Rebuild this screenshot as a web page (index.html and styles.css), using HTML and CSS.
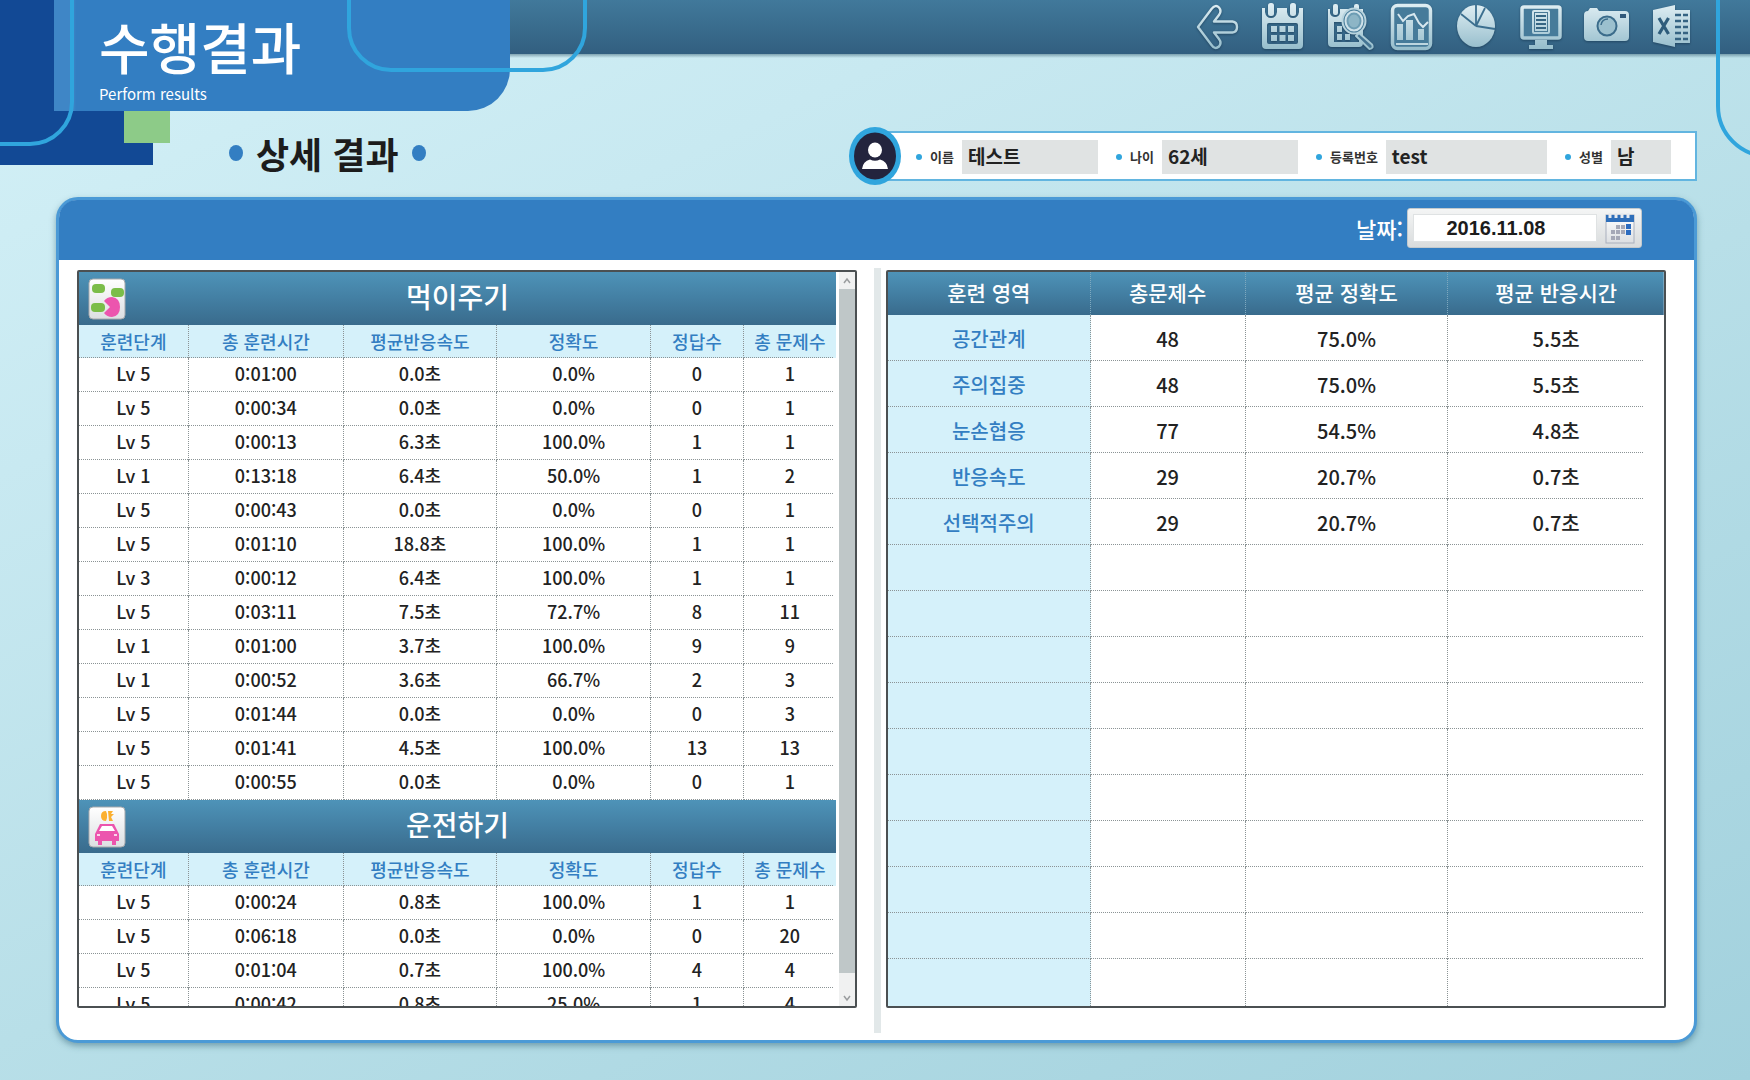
FILE: index.html
```html
<!DOCTYPE html>
<html lang="ko">
<head>
<meta charset="utf-8">
<meta name="viewport" content="width=device-width, initial-scale=1">
<title>수행결과 - 상세 결과</title>
<link rel="stylesheet" href="styles.css">
</head>
<body>
<svg class="defs" width="0" height="0" aria-hidden="true">
  <defs>
    <linearGradient id="steel" gradientUnits="userSpaceOnUse" x1="0" y1="4" x2="0" y2="50">
      <stop offset="0" stop-color="#dfeef3"/><stop offset="1" stop-color="#94bccb"/>
    </linearGradient>
    <linearGradient id="tile" x1="0" y1="0" x2="0" y2="1">
      <stop offset="0" stop-color="#ffffff"/><stop offset="1" stop-color="#dcdfe2"/>
    </linearGradient>
  </defs>
</svg>

<header class="top">
  <div class="brand">
    <h1 class="brand-title">수행결과</h1>
    <p class="brand-sub">Perform results</p>
  </div>
  <div class="deco" aria-hidden="true">
    <span class="deco-navy"></span>
    <span class="deco-step"></span>
    <span class="deco-green"></span>
    <span class="outline outline-left"></span>
    <span class="outline outline-mid"></span>
    <span class="outline outline-right"></span>
  </div>
  <nav class="tools" aria-label="도구">
    <button class="tool" type="button" aria-label="뒤로">
      <svg viewBox="0 0 48 54"><path d="M5 27 18.500 9q4-5 7.500-1.500Q29 11 26 15L21 21.500H39.500Q44 22 44 27T39.500 32.500H21L26 39Q29 43 26 46.500 22 50 18.500 45Z" fill="none" stroke="url(#steel)" stroke-width="2.400" stroke-linejoin="round"/></svg>
    </button>
    <button class="tool" type="button" aria-label="달력">
      <svg viewBox="0 0 48 54" fill="url(#steel)"><path fill-rule="evenodd" d="M4 8h3v4q1 6 6 6t6-6V8h10v4q1 6 6 6t6-6V8h4v37q0 4-4 4H8q-4 0-4-4ZM11 23q-2 0-2 2v17q0 2 2 2h27q2 0 2-2V25q0-2-2-2Z"/><rect x="10" y="3" width="6" height="13" rx="2.500"/><rect x="32" y="3" width="6" height="13" rx="2.500"/><path d="M13 26h6v6h-6zM21.500 26h6v6h-6zM30 26h6v6h-6zM13 35h6v6h-6zM21.500 35h6v6h-6zM30 35h6v6h-6z"/></svg>
    </button>
    <button class="tool" type="button" aria-label="달력 조회">
      <svg viewBox="0 0 48 54" fill="url(#steel)"><path fill-rule="evenodd" d="M5 9h2v4q1 4 5 4t5-4V9h23v34q0 4-4 4H9q-4 0-4-4ZM11 22v20h25V22Z"/><rect x="10" y="4" width="5" height="11" rx="2"/><rect x="31" y="4" width="5" height="8" rx="2"/><path d="M14 26h5v6h-5zM14 34h5v6h-5zM22 34h5v6h-5z"/><path d="M36 33 49 44.500q2 4-2.500 4.500L33 36Z" fill="#447493" stroke="url(#steel)" stroke-width="2" stroke-linejoin="round"/><ellipse cx="31" cy="21" rx="11.500" ry="12.500" fill="#4b7f9c" stroke="#b9d4de" stroke-width="2"/><ellipse cx="31" cy="21" rx="8.500" ry="9.500" fill="#6d9db4" stroke="#cfe2ea" stroke-width="2"/><ellipse cx="31" cy="21" rx="5.500" ry="6.500" fill="#8db5c6"/></svg>
    </button>
    <button class="tool" type="button" aria-label="그래프">
      <svg viewBox="0 0 48 54"><rect x="4.500" y="5.500" width="38" height="43" rx="5" fill="#467b9a" stroke="url(#steel)" stroke-width="3.500"/><path d="M9 24h6v16H9zM18 20h7v20h-7zM30 29h6v11h-6z" fill="url(#steel)"/><path d="M10 14l5 7 5-5 6-2 5 9 4 4 5-5" fill="none" stroke="#d8e8ef" stroke-width="2"/><path d="M8 43h32v2H8z" fill="#bdd6e0"/></svg>
    </button>
    <button class="tool" type="button" aria-label="통계">
      <svg viewBox="0 0 48 54"><ellipse cx="23" cy="26" rx="19" ry="21" fill="url(#steel)"/><path d="M23 26 8 14M23 26V5M23 26l9-18M23 26l19 3" stroke="#3c6f8f" stroke-width="1.800" fill="none"/></svg>
    </button>
    <button class="tool" type="button" aria-label="화면">
      <svg viewBox="0 0 48 54"><rect x="4" y="7" width="38" height="31" rx="2" fill="#467b9a" stroke="url(#steel)" stroke-width="3.500"/><path d="M17 40h12v5h6v4H11v-4h6z" fill="url(#steel)"/><rect x="14" y="10" width="18" height="24" rx="2" fill="url(#steel)"/><rect x="16.500" y="12.500" width="13" height="19" fill="none" stroke="#497a96" stroke-width="1"/><path d="M18 16h10M18 20h10M18 24h10M18 28h10" stroke="#356583" stroke-width="1.800"/></svg>
    </button>
    <button class="tool" type="button" aria-label="캡처">
      <svg viewBox="0 0 48 54"><path d="M5 11 7 8h7l2 3h26q4 0 4 4v22q0 4-4 4H5q-4 0-4-4V15q0-4 4-4Z" fill="url(#steel)"/><circle cx="24" cy="26" r="9.500" fill="#9bc0ce" stroke="#3b6c8b" stroke-width="2"/><path d="M18 25q1-6 7-6" fill="none" stroke="#3b6c8b" stroke-width="1.500"/><rect x="37" y="14" width="6" height="4" fill="#31597a"/></svg>
    </button>
    <button class="tool" type="button" aria-label="엑셀 저장">
      <svg viewBox="0 0 48 54"><path d="M26 10h16v33H26z" fill="url(#steel)"/><path d="M27 15h13M27 21h13M27 27h13M27 33h13M27 39h13" stroke="#356382" stroke-width="2.600" stroke-dasharray="6 2"/><path d="M5 10 27 5v42L5 42Z" fill="url(#steel)"/><path d="M11 18 20.500 34M20.500 18 11 34" stroke="#2e5c7b" stroke-width="3.200"/></svg>
    </button>
  </nav>
</header>

<section class="subhead">
  <h2 class="subtitle">상세 결과</h2>
  <div class="profile">
    <svg class="avatar" viewBox="0 0 52 58" aria-hidden="true"><ellipse cx="26" cy="29" rx="26" ry="29" fill="#30a5dd"/><ellipse cx="26" cy="29" rx="21" ry="23.500" fill="#23243d"/><ellipse cx="26" cy="23" rx="7" ry="7.500" fill="#fff"/><path d="M13 42q1-8 8-9.500Q26 35 31 32.500q7 1.500 8 9.500Z" fill="#fff"/></svg>
    <dl class="fields">
      <div class="field"><dt>이름</dt><dd>테스트</dd></div>
      <div class="field"><dt>나이</dt><dd>62세</dd></div>
      <div class="field"><dt>등록번호</dt><dd>test</dd></div>
      <div class="field"><dt>성별</dt><dd>남</dd></div>
    </dl>
  </div>
</section>

<main class="panel">
  <form class="panel-head">
    <label class="date-label" for="date">날짜:</label>
    <div class="date-box">
      <input class="date-input" id="date" type="text" value="2016.11.08">
      <button class="date-button" type="button" aria-label="날짜 선택">
        <svg viewBox="0 0 30 32"><rect x="1" y="3" width="28" height="28" fill="url(#tile)" stroke="#aab0bd"/><path d="M1 3h28v7H1z" fill="#2f6fba"/><path d="M5 1v5M11 1v5M17 1v5M23 1v5" stroke="#e8ebef" stroke-width="3"/><path d="M11 13h4v4h-4zM16 13h4v4h-4zM6 18h4v4H6zM11 18h4v4h-4zM16 18h4v4h-4zM6 24h4v4H6zM11 24h4v4h-4z" fill="#a6a9b7"/><path d="M21 12h5v5h-5zM21 18h5v5h-5z" fill="#2c6cc0"/></svg>
      </button>
    </div>
  </form>

  <div class="panel-body">
    <div class="frame games">
      <div class="game-list">
        <section class="game">
          <div class="game-head">
            <svg class="game-icon" viewBox="0 0 38 42" aria-hidden="true"><rect x="1" y="1" width="36" height="40" rx="4" fill="url(#tile)" stroke="#a7a9ac"/><rect x="4" y="6" width="13" height="9" rx="4" fill="#7bbd49"/><rect x="23" y="10" width="13" height="9" rx="4" fill="#7bbd49"/><rect x="3" y="25" width="14" height="9" rx="4" fill="#7bbd49"/><path d="M22 29 16 23q3-4 8-4 8 1 8 10t-8 10q-5 0-8-4Z" fill="#ec55ae"/></svg>
            <h3 class="game-title">먹이주기</h3>
          </div>
          <table class="grid scores">
            <thead><tr><th>훈련단계</th><th>총 훈련시간</th><th>평균반응속도</th><th>정확도</th><th>정답수</th><th>총 문제수</th></tr></thead>
            <tbody>
              <tr><td>Lv 5</td><td>0:01:00</td><td>0.0초</td><td>0.0%</td><td>0</td><td>1</td></tr>
              <tr><td>Lv 5</td><td>0:00:34</td><td>0.0초</td><td>0.0%</td><td>0</td><td>1</td></tr>
              <tr><td>Lv 5</td><td>0:00:13</td><td>6.3초</td><td>100.0%</td><td>1</td><td>1</td></tr>
              <tr><td>Lv 1</td><td>0:13:18</td><td>6.4초</td><td>50.0%</td><td>1</td><td>2</td></tr>
              <tr><td>Lv 5</td><td>0:00:43</td><td>0.0초</td><td>0.0%</td><td>0</td><td>1</td></tr>
              <tr><td>Lv 5</td><td>0:01:10</td><td>18.8초</td><td>100.0%</td><td>1</td><td>1</td></tr>
              <tr><td>Lv 3</td><td>0:00:12</td><td>6.4초</td><td>100.0%</td><td>1</td><td>1</td></tr>
              <tr><td>Lv 5</td><td>0:03:11</td><td>7.5초</td><td>72.7%</td><td>8</td><td>11</td></tr>
              <tr><td>Lv 1</td><td>0:01:00</td><td>3.7초</td><td>100.0%</td><td>9</td><td>9</td></tr>
              <tr><td>Lv 1</td><td>0:00:52</td><td>3.6초</td><td>66.7%</td><td>2</td><td>3</td></tr>
              <tr><td>Lv 5</td><td>0:01:44</td><td>0.0초</td><td>0.0%</td><td>0</td><td>3</td></tr>
              <tr><td>Lv 5</td><td>0:01:41</td><td>4.5초</td><td>100.0%</td><td>13</td><td>13</td></tr>
              <tr><td>Lv 5</td><td>0:00:55</td><td>0.0초</td><td>0.0%</td><td>0</td><td>1</td></tr>
            </tbody>
          </table>
        </section>
        <section class="game">
          <div class="game-head">
            <svg class="game-icon" viewBox="0 0 38 42" aria-hidden="true"><rect x="1" y="1" width="36" height="40" rx="4" fill="url(#tile)" stroke="#a7a9ac"/><path d="M18 5q-5 0-5 5t5 5l1-3v-4ZM20 5h5l-2 3h3l-3 3 2 4h-4Z" fill="#fbb030"/><path d="M8 26 12 18h14l4 8 1 2v7h-3v4h-4v-4H14v4h-4v-4H7v-7Z" fill="#ec55ae"/><path d="M11 25l3-5h10l3 5Z" fill="#fff"/><path d="M9 28h3v2H9zM26 28h3v2h-3z" fill="#fbd3ea"/></svg>
            <h3 class="game-title">운전하기</h3>
          </div>
          <table class="grid scores">
            <thead><tr><th>훈련단계</th><th>총 훈련시간</th><th>평균반응속도</th><th>정확도</th><th>정답수</th><th>총 문제수</th></tr></thead>
            <tbody>
              <tr><td>Lv 5</td><td>0:00:24</td><td>0.8초</td><td>100.0%</td><td>1</td><td>1</td></tr>
              <tr><td>Lv 5</td><td>0:06:18</td><td>0.0초</td><td>0.0%</td><td>0</td><td>20</td></tr>
              <tr><td>Lv 5</td><td>0:01:04</td><td>0.7초</td><td>100.0%</td><td>4</td><td>4</td></tr>
              <tr><td>Lv 5</td><td>0:00:42</td><td>0.8초</td><td>25.0%</td><td>1</td><td>4</td></tr>
            </tbody>
          </table>
        </section>
      </div>
      <div class="scrollbar" aria-hidden="true">
        <svg viewBox="0 0 16 17"><path d="M5 11l3-4 3 4" fill="none" stroke="#9a9d9f" stroke-width="1.500"/></svg>
        <span class="thumb"></span>
        <svg viewBox="0 0 16 17"><path d="M5 7l3 4 3-4" fill="none" stroke="#9a9d9f" stroke-width="1.500"/></svg>
      </div>
    </div>

    <div class="divider"></div>

    <div class="frame summary">
      <table class="grid areas">
        <thead><tr><th>훈련 영역</th><th>총문제수</th><th>평균 정확도</th><th>평균 반응시간</th></tr></thead>
        <tbody>
          <tr><th scope="row">공간관계</th><td>48</td><td>75.0%</td><td>5.5초</td></tr>
          <tr><th scope="row">주의집중</th><td>48</td><td>75.0%</td><td>5.5초</td></tr>
          <tr><th scope="row">눈손협응</th><td>77</td><td>54.5%</td><td>4.8초</td></tr>
          <tr><th scope="row">반응속도</th><td>29</td><td>20.7%</td><td>0.7초</td></tr>
          <tr><th scope="row">선택적주의</th><td>29</td><td>20.7%</td><td>0.7초</td></tr>
          <tr><th></th><td></td><td></td><td></td></tr>
          <tr><th></th><td></td><td></td><td></td></tr>
          <tr><th></th><td></td><td></td><td></td></tr>
          <tr><th></th><td></td><td></td><td></td></tr>
          <tr><th></th><td></td><td></td><td></td></tr>
          <tr><th></th><td></td><td></td><td></td></tr>
          <tr><th></th><td></td><td></td><td></td></tr>
          <tr><th></th><td></td><td></td><td></td></tr>
          <tr><th></th><td></td><td></td><td></td></tr>
          <tr><th></th><td></td><td></td><td></td></tr>
        </tbody>
      </table>
    </div>
  </div>
</main>
</body>
</html>
```
FILE: styles.css
```css
* { box-sizing: border-box; }

body {
  margin: 0;
  min-height: 100vh;
  background: linear-gradient(155deg, #d4f1f7 0%, #c8e9f1 25%, #b8dfe8 55%, #a2d1dd 100%);
  color: #222;
  font-family: "Noto Sans CJK KR", "Noto Sans", sans-serif;
}

h1, h2, h3, p, dl, dd { margin: 0; }
button { padding: 0; border: 0; background: none; cursor: pointer; }
svg { display: block; }
.defs { position: absolute; }

/* Header */
.top {
  position: relative;
  display: flex;
  justify-content: space-between;
  align-items: flex-start;
  padding-left: 54px;
  background: linear-gradient(#41799b, #325f80) 0 0 / 100% 54px no-repeat;
}
.top::before {
  content: "";
  position: absolute;
  inset: 54px 0 auto;
  height: 4px;
  background: linear-gradient(rgba(50, 90, 110, .5), transparent);
}
.brand {
  position: relative;
  z-index: 1;
  flex: 0 0 456px;
  height: 111px;
  padding: 6px 0 0 45px;
  border-radius: 0 0 42px 0;
  background: linear-gradient(90deg, #3f86c6 19px, #337ec2 22px);
  color: #fff;
}
.brand-title { font-size: 55px; line-height: 78px; font-weight: 500; }
.brand-sub { font-size: 15px; line-height: 20px; }

.deco {
  position: absolute;
  inset: 0 0 auto;
  z-index: 2;
  height: 170px;
  overflow: hidden;
  pointer-events: none;
}
.deco span { position: absolute; }
.deco-navy { left: 0; top: 0; width: 54px; height: 165px; background: #124995; }
.deco-step { left: 54px; top: 111px; width: 99px; height: 54px; background: #124995; }
.deco-green { left: 124px; top: 111px; width: 46px; height: 32px; background: #8dcb88; }
.outline { border: 4px solid #30a5dd; }
.outline-left { left: -60px; top: -20px; width: 134px; height: 166px; border-radius: 0 0 44px 0; }
.outline-mid { left: 347px; top: -20px; width: 240px; height: 92px; border-radius: 0 0 44px 44px; }
.outline-right { right: -70px; top: -20px; width: 104px; height: 178px; border-radius: 0 0 0 52px; }

.tools { display: flex; gap: 17px; padding-right: 54px; }
.tool { width: 48px; height: 54px; filter: drop-shadow(0 1px 1px rgba(20, 50, 75, .6)); }
.tool svg { width: 48px; height: 54px; overflow: visible; }

/* Title and profile */
.subhead {
  display: flex;
  justify-content: space-between;
  align-items: center;
  height: 86px;
  padding: 4px 53px 0 229px;
}
.subtitle {
  display: flex;
  align-items: center;
  gap: 13px;
  padding-bottom: 6px;
  font-size: 36px;
  line-height: 48px;
  font-weight: 700;
  color: #1c1c1c;
}
.subtitle::before, .subtitle::after {
  content: "";
  width: 14px;
  height: 16px;
  border-radius: 50%;
  background: #337ec2;
}
.profile { display: flex; align-items: center; flex: 0 1 848px; }
.avatar { position: relative; flex: none; width: 52px; height: 58px; margin-right: -26px; }
.fields {
  flex: 1;
  display: grid;
  grid-template-columns: 182fr 182fr 231fr 106fr;
  gap: 18px;
  height: 50px;
  padding: 7px 24px 7px 39px;
  border: 2px solid #62b5e0;
  background: #fff;
}
.field { display: flex; align-items: center; gap: 8px; }
.field::before { content: ""; width: 6px; height: 6px; border-radius: 50%; background: #30a5dd; }
.field dt { font-size: 13px; line-height: 34px; font-weight: 700; white-space: nowrap; color: #333; }
.field dd {
  flex: 1;
  height: 34px;
  padding-left: 6px;
  background: #e0e3e3;
  font-size: 19px;
  line-height: 32px;
  font-weight: 700;
}

/* Main panel */
.panel {
  margin: 0 53px 36px 56px;
  border: 3px solid #4b9ad6;
  border-radius: 22px;
  background: #fff;
  box-shadow: 0 3px 6px rgba(50, 100, 120, .5);
}
.panel-head {
  display: flex;
  justify-content: flex-end;
  align-items: center;
  gap: 4px;
  height: 60px;
  padding: 0 52px 4px 0;
  border-radius: 18px 18px 0 0;
  background: #337ec2;
}
.date-label { color: #fff; font-size: 22px; font-weight: 500; }
.date-box {
  display: flex;
  align-items: center;
  gap: 8px;
  height: 40px;
  padding: 0 6px 0 5px;
  border: 1px solid #c3c9cd;
  border-radius: 3px;
  background: linear-gradient(#f4f5f5, #d9dcdd);
}
.date-input {
  width: 184px;
  height: 28px;
  padding: 0 18px 0 0;
  border: 1px solid #dfe2e3;
  background: #fff;
  color: #1c1c1c;
  font: 700 20px "Liberation Sans", Arial, sans-serif;
  text-align: center;
}
.date-button svg { width: 30px; height: 32px; }

.panel-body {
  display: grid;
  grid-template-columns: 797fr 7px 785fr;
  padding: 10px 28px 32px 18px;
}
.frame { border: 2px solid #4b5052; border-radius: 2px; background: #fff; }
.divider { margin: -2px 0 -25px; background: #e2e8e9; }
.games { display: flex; margin-right: 17px; contain: size; }
.summary { margin-left: 5px; }

/* Tables */
.grid {
  --line: repeating-linear-gradient(90deg, #8b9395 0 1px, transparent 1px 2px);
  --trim: 0px;
  width: 100%;
  border-spacing: 0;
  table-layout: fixed;
  text-align: center;
}
.grid th, .grid td {
  padding: 0;
  border-right: 1px dotted #8b9395;
  background: var(--line) 0 100% / calc(100% - var(--trim)) 1px no-repeat;
  font-weight: 500;
  white-space: nowrap;
}
.grid th:last-child, .grid td:last-child { border-right: 0; }

.game-list { flex: 1; min-width: 0; overflow-y: scroll; scrollbar-width: none; }
.game-head {
  display: grid;
  grid-template-columns: 38px 1fr 38px;
  align-items: center;
  height: 53px;
  padding: 0 9px;
  background: linear-gradient(#4e93b8, #437fa3 50%, #396b8c);
}
.game-icon { width: 38px; height: 42px; }
.game-title {
  padding-bottom: 6px;
  color: #fff;
  font-size: 28px;
  line-height: 40px;
  font-weight: 500;
  text-align: center;
}

.scores td { height: 34px; padding-bottom: 4px; font-size: 18px; line-height: 24px; }
.scores th {
  height: 33px;
  padding-bottom: 2px;
  background-color: #d5f1fa;
  color: #337ec2;
  font-size: 18px;
  line-height: 24px;
}
.scores th:nth-child(1) { width: 14.5%; }
.scores th:nth-child(2) { width: 20.5%; }
.scores th:nth-child(3) { width: 20.2%; }
.scores th:nth-child(4) { width: 20.4%; }
.scores th:nth-child(5) { width: 12.2%; }
.scores th:last-child, .scores td:last-child { --trim: 3px; }

.scrollbar {
  display: flex;
  flex-direction: column;
  width: 16px;
  margin-left: 3px;
  background: #f0f1f1;
}
.scrollbar svg { width: 16px; height: 17px; flex: none; }
.thumb { flex: 1; margin-bottom: 16px; background: #bfc7c8; }

.areas thead { background: linear-gradient(#4e93b8, #437fa3 50%, #396b8c); }
.areas thead th {
  height: 43px;
  padding-bottom: 4px;
  border-color: #7fa9bf;
  background: none;
  color: #fff;
  font-size: 21px;
  line-height: 30px;
}
.areas thead th:nth-child(1) { width: 26.1%; }
.areas thead th:nth-child(2) { width: 20%; }
.areas thead th:nth-child(3) { width: 26.1%; }
.areas tbody th, .areas tbody td { height: 46px; padding-top: 2px; font-size: 20px; line-height: 28px; }
.areas tbody th { background-color: #d5f1fa; color: #337ec2; }
.areas tbody td:last-child { --trim: 20px; }
.areas tbody tr:last-child > * { height: 47px; background-image: none; }
```
